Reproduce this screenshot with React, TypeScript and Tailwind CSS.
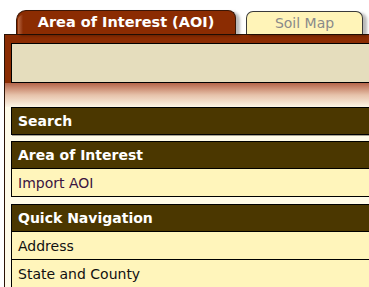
import React from 'react';

type Section = { title: string; items: string[]; gap: string };

const sections: Section[] = [
  { title: 'Search', items: [], gap: 'mb-[6px]' },
  { title: 'Area of Interest', items: ['Import AOI'], gap: 'mb-[7px]' },
  { title: 'Quick Navigation', items: ['Address', 'State and County'], gap: '' },
];

export default function App() {
  return (
    <div className="w-[369px] h-[287px] overflow-hidden bg-white font-['DejaVu_Sans','Verdana',sans-serif]">
      {/* Tabs */}
      <div className="flex items-end h-[34px] pl-[16px]">
        <div className="relative w-[220px] h-[24px] rounded-tl-[10px] rounded-tr-[8px] border border-b-0 border-[#3b1605] bg-[#8b2c02] shadow-[4px_2px_3px_rgba(0,0,0,0.28)] flex items-center justify-center">
          <div className="absolute left-[1px] top-[4px] bottom-0 w-[5px] rounded-tl-[8px] bg-gradient-to-r from-[#b8683f] to-[#8b2c02]" />
          <span className="relative text-[14.5px] font-bold text-white leading-none">Area of Interest (AOI)</span>
        </div>
        <div className="ml-[10px] w-[117px] h-[23px] rounded-t-[7px] border border-b-0 border-[#3a3a3a] bg-[#fff4b8] shadow-[4px_2px_3px_rgba(0,0,0,0.28)] flex items-center justify-center">
          <span className="text-[14px] text-[#8a8a8a] leading-none">Soil Map</span>
        </div>
      </div>

      {/* Panel */}
      <div className="ml-[4px] border-l border-t border-[#2a1205] bg-[#fffbe8]">
        <div className="bg-[#8b2c02] pt-[8px] pl-[6px]">
          <div className="h-[40px] border border-r-0 border-black bg-[#e5ddbd]" />
        </div>
        <div className="h-[24px] bg-gradient-to-b from-[#b4654a] via-[#e6c2aa] to-[#fcf5e6]" />

        <div className="pl-[6px]">
          {sections.map(s => (
            <div key={s.title} className={`border-l border-black ${s.gap}`}>
              <div className="h-[28px] border-y border-black bg-[#4b3700] flex items-center pl-[6px] shadow-[0_1px_0_#a8a290]">
                <span className="text-[14px] font-bold text-white leading-none">{s.title}</span>
              </div>
              {s.items.map(item => (
                <div key={item} className="h-[28px] border-b border-black bg-[#fff5bb] flex items-center pl-[6px]">
                  <span className={`text-[14px] leading-none ${item === 'Import AOI' ? 'text-[#3a1440]' : 'text-[#111111]'}`}>{item}</span>
                </div>
              ))}
            </div>
          ))}
        </div>
      </div>
    </div>
  );
}
